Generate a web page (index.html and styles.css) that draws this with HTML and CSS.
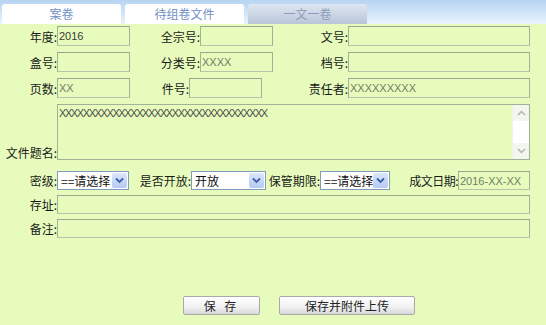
FILE: index.html
```html
<!DOCTYPE html>
<html lang="zh-CN">
  <head>
    <meta charset="UTF-8" />
    <meta name="viewport" content="width=device-width, initial-scale=1.0" />
    <title>一文一卷</title>
    <link rel="stylesheet" href="styles.css">
  </head>

  <body>
    <div class="tabs">
      <div class="tab">案卷</div>
      <div class="tab">待组卷文件</div>
      <div class="tab tab-current">一文一卷</div>
    </div>

    <div class="form">
      <div class="row">
        <label class="lbl w57">年度:</label>
        <input class="txt w73 dark" type="text" value="2016" />
        <label class="lbl w70">全宗号:</label>
        <input class="txt w73" type="text" />
        <label class="lbl w75">文号:</label>
        <input class="txt w182" type="text" />
      </div>
      <div class="row">
        <label class="lbl w57">盒号:</label>
        <input class="txt w73" type="text" />
        <label class="lbl w70">分类号:</label>
        <input class="txt w73" type="text" value="XXXX" />
        <label class="lbl w75">档号:</label>
        <input class="txt w182" type="text" />
      </div>
      <div class="row">
        <label class="lbl w57">页数:</label>
        <input class="txt w73" type="text" value="XX" />
        <label class="lbl w59">件号:</label>
        <input class="txt w73" type="text" />
        <label class="lbl w86">责任者:</label>
        <input class="txt w182" type="text" value="XXXXXXXXX" />
      </div>

      <div class="row row-area">
        <label class="lbl w57 lbl-bottom">文件题名:</label>
        <span class="area-wrap">
          <textarea class="area">XXXXXXXXXXXXXXXXXXXXXXXXXXXXXXXXXXX</textarea>
          <span class="vscroll">
            <span class="vscroll-btn"><svg width="9" height="6" viewBox="0 0 9 6"><path d="M1 5 L4.5 1.5 L8 5" fill="none" stroke="#b4b4b4" stroke-width="1.5"/></svg></span>
            <span class="vscroll-track"></span>
            <span class="vscroll-btn"><svg width="9" height="6" viewBox="0 0 9 6"><path d="M1 1 L4.5 4.5 L8 1" fill="none" stroke="#b4b4b4" stroke-width="1.5"/></svg></span>
          </span>
        </span>
      </div>

      <div class="row row-select">
        <label class="lbl w57">密级:</label>
        <span class="sel w72">
          <select><option>==请选择</option></select>
          <span class="sel-btn"><svg width="9" height="7" viewBox="0 0 9 7"><path d="M1 1.5 L4.5 5 L8 1.5" fill="none" stroke="#3a5fa8" stroke-width="1.8"/></svg></span>
        </span>
        <label class="lbl w62">是否开放:</label>
        <span class="sel w75">
          <select><option>开放</option></select>
          <span class="sel-btn"><svg width="9" height="7" viewBox="0 0 9 7"><path d="M1 1.5 L4.5 5 L8 1.5" fill="none" stroke="#3a5fa8" stroke-width="1.8"/></svg></span>
        </span>
        <label class="lbl w54">保管期限:</label>
        <span class="sel w70">
          <select><option>==请选择</option></select>
          <span class="sel-btn"><svg width="9" height="7" viewBox="0 0 9 7"><path d="M1 1.5 L4.5 5 L8 1.5" fill="none" stroke="#3a5fa8" stroke-width="1.8"/></svg></span>
        </span>
        <label class="lbl w68 lbl-date">成文日期:</label>
        <input class="txt w72" type="text" value="2016-XX-XX" />
      </div>

      <div class="row row-tight">
        <label class="lbl w57">存址:</label>
        <input class="txt wide" type="text" />
      </div>
      <div class="row row-tight2">
        <label class="lbl w57">备注:</label>
        <input class="txt wide" type="text" />
      </div>

      <div class="actions">
        <button class="btn btn-save">保 存</button>
        <button class="btn btn-upload">保存并附件上传</button>
      </div>
    </div>
  </body>
</html>
```

FILE: styles.css
```css
body {
  margin: 0;
  background: #e7fcbc;
  font-family: "Noto Sans CJK SC", "Liberation Sans", sans-serif;
  font-size: 12px;
  color: #222;
}

.tabs {
  display: flex;
  gap: 4px;
  height: 24px;
  padding: 4px 0 0 2px;
  box-sizing: border-box;
  background: linear-gradient(#b7d4f2, #d9eafa 70%, #e9f3fc);
}
.tab {
  width: 119px;
  height: 20px;
  line-height: 20px;
  text-align: center;
  background: #fff;
  color: #6f90c4;
  border-radius: 3px 3px 0 0;
  font-size: 12px;
}
.tab-current {
  background: linear-gradient(#dfe6f0, #b9c6d9);
  color: #8c9cba;
}

.form {
  padding-top: 2px;
}

.row {
  display: flex;
  align-items: center;
  height: 20px;
  margin-bottom: 6px;
}
.row-area {
  height: 56px;
  align-items: flex-end;
  margin-top: 3px;
  margin-bottom: 11px;
}
.row-select {
  height: 19px;
  margin-bottom: 5px;
}
.row-tight {
  height: 19px;
  margin-bottom: 5px;
}
.row-tight2 {
  height: 19px;
}

.lbl {
  flex: none;
  text-align: right;
  white-space: nowrap;
  color: #1a1a1a;
}
.lbl-bottom {
  line-height: 14px;
}
.lbl-date {
  letter-spacing: -0.5px;
}
.w54 { width: 54px; }
.w57 { width: 57px; }
.w59 { width: 59px; }
.w62 { width: 62px; }
.w68 { width: 68px; }
.w70 { width: 70px; }
.w75 { width: 75px; }
.w86 { width: 86px; }

.txt {
  flex: none;
  box-sizing: border-box;
  height: 100%;
  margin: 0;
  padding: 0 1px;
  border: 1px solid #a2b29a;
  border-top-color: #97a68f;
  border-bottom-color: #b7c6aa;
  background: #e7fcbc;
  font-family: "Liberation Sans", sans-serif;
  font-size: 11px;
  color: #737d69;
  outline: none;
}
.txt.dark {
  color: #3a3a3a;
}
.w72 { width: 72px; }
.w73 { width: 73px; }
.w182 { width: 182px; }
.wide { width: 473px; }

.area-wrap {
  flex: none;
  position: relative;
  width: 473px;
  height: 56px;
}
.area {
  display: block;
  box-sizing: border-box;
  width: 100%;
  height: 100%;
  margin: 0;
  padding: 2px 2px 1px 1px;
  border: 1px solid #a2b29a;
  background: #e7fcbc;
  font-family: "Liberation Sans", sans-serif;
  font-size: 11px;
  letter-spacing: -1.4px;
  line-height: 13px;
  color: #4d4d4d;
  resize: none;
  overflow: hidden;
}
.vscroll {
  position: absolute;
  top: 1px;
  right: 1px;
  bottom: 1px;
  width: 16px;
  display: flex;
  flex-direction: column;
  background: #fff;
  border-left: 1px solid #eef3e6;
}
.vscroll-btn {
  height: 16px;
  display: flex;
  align-items: center;
  justify-content: center;
  background: #f3f5ef;
}
.vscroll-track {
  flex: 1;
  background: #fff;
}

.sel {
  flex: none;
  position: relative;
  height: 19px;
}
.sel select {
  appearance: none;
  -webkit-appearance: none;
  box-sizing: border-box;
  width: 100%;
  height: 100%;
  margin: 0;
  padding: 0 0 0 3px;
  border: 1px solid #7f9db9;
  background: #fff;
  font-family: "Noto Sans CJK SC", sans-serif;
  font-size: 12px;
  color: #111;
  outline: none;
}
.sel-btn {
  position: absolute;
  top: 2px;
  right: 2px;
  width: 15px;
  height: 15px;
  display: flex;
  align-items: center;
  justify-content: center;
  background: linear-gradient(#dbe6fb, #b5c9f2);
  border-radius: 2px;
}

.actions {
  display: flex;
  gap: 19px;
  padding: 52px 0 0 183px;
}
.btn {
  height: 19px;
  padding: 0;
  border: 1px solid #a9a9a9;
  border-radius: 2px;
  background: linear-gradient(#ffffff, #f1f1f1 60%, #d8d8d8);
  font-family: "Noto Sans CJK SC", sans-serif;
  font-size: 12px;
  color: #222;
  line-height: 16px;
}
.btn-save {
  width: 77px;
  letter-spacing: 3px;
}
.btn-upload {
  width: 136px;
}
```
